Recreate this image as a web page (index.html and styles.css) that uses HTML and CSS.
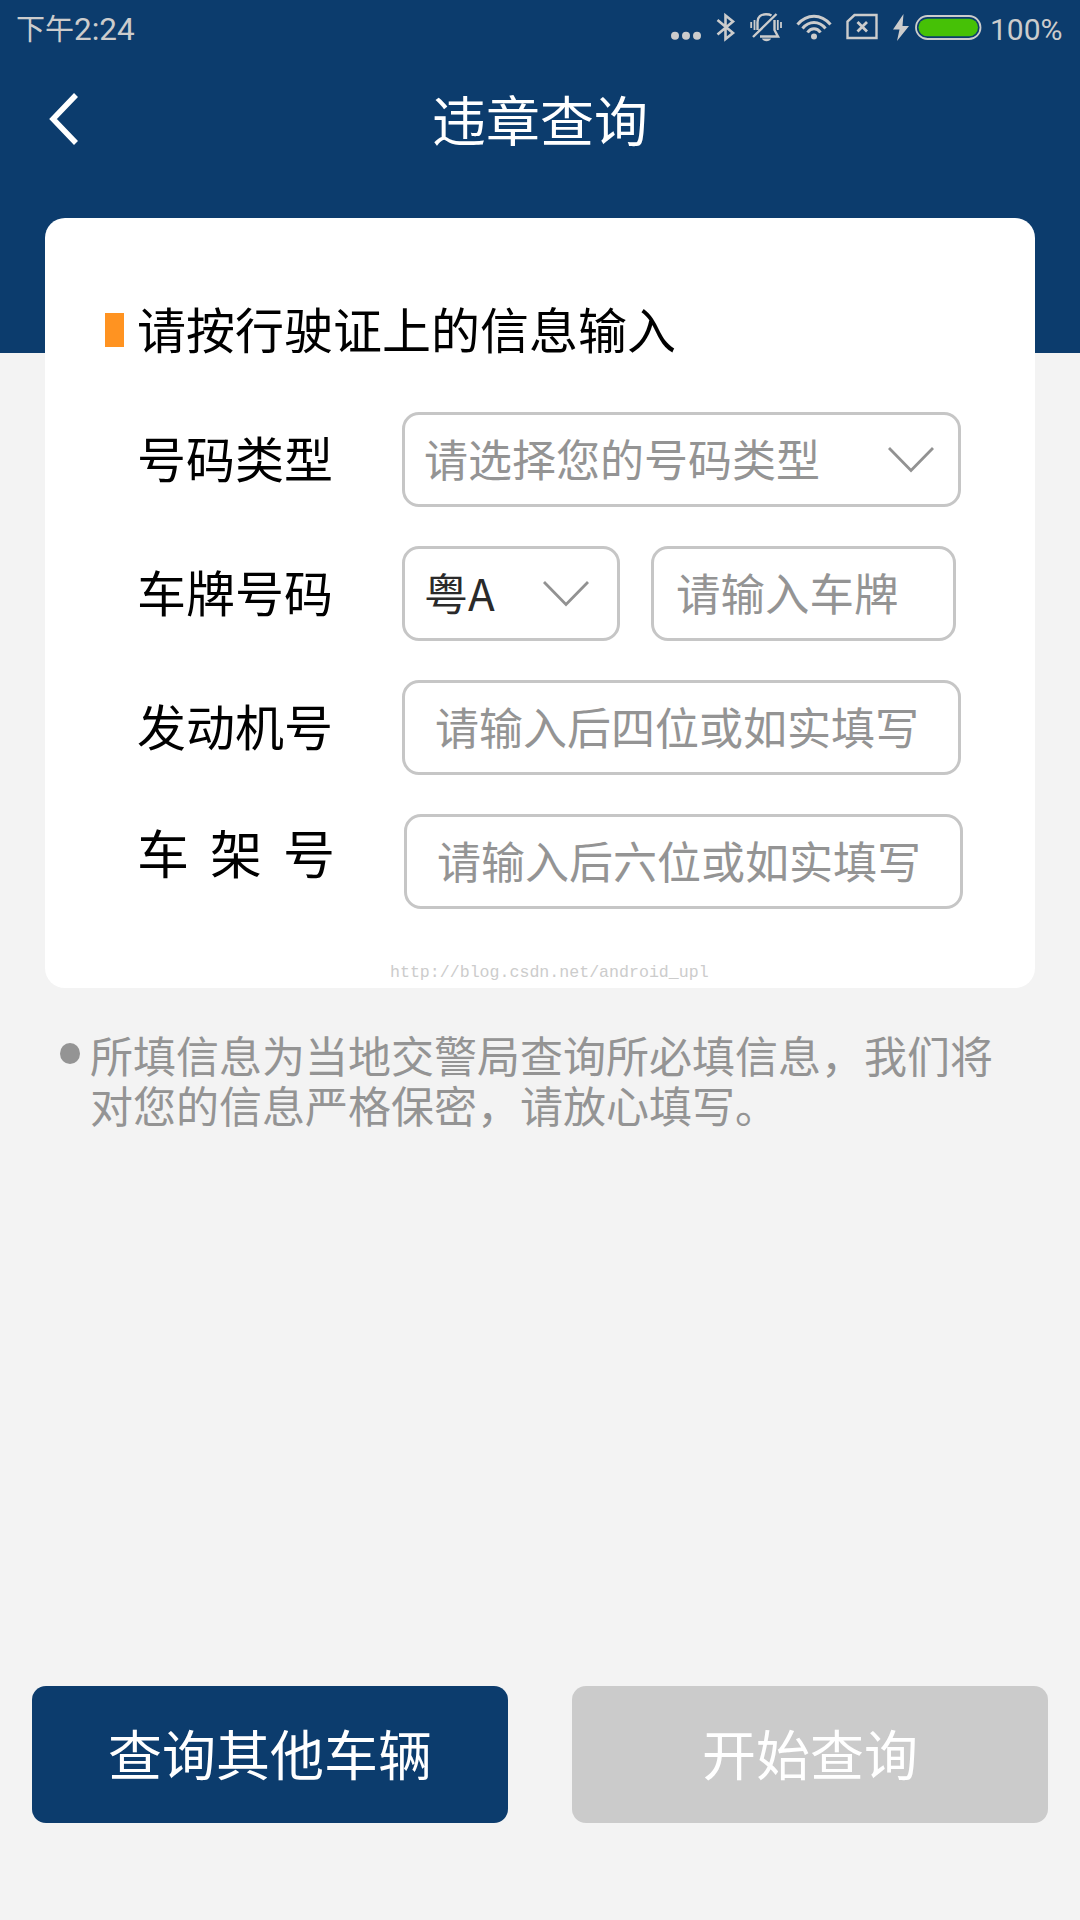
FILE: index.html
```
<!DOCTYPE html>
<html lang="zh-CN">
<head>
    <meta charset="UTF-8">
    <meta name="viewport" content="width=device-width, initial-scale=1.0">
    <title>违章查询</title>
    <link rel="stylesheet" href="styles.css">
</head>
<body>

<header class="header">
    <div class="status-bar">
        <div class="status-time"><span class="ampm">下午</span>2:24</div>
        <div class="status-icons">
            <svg class="icon-dots" width="30" height="50" viewBox="0 0 30 50" fill="#ccc">
                <circle cx="4" cy="35.7" r="4"/>
                <circle cx="15" cy="35.7" r="4"/>
                <circle cx="26" cy="35.7" r="4"/>
            </svg>
            <svg class="icon-bluetooth" width="20" height="50" viewBox="0 0 20 50" fill="none" stroke="#ccc" stroke-width="2.6">
                <path d="M1.5 20L17 33L9.5 39V15.500L17 21.500L1.500 34.500"/>
            </svg>
            <svg class="icon-bell" width="32" height="50" viewBox="0 0 32 50" fill="none" stroke="#ccc" stroke-width="2.4">
                <path d="M7.500 30V22C7.500 17 11 14.200 16 14.200C18 14.200 20 14.600 21.500 15.500M24.500 20V30L28 36.500H10M26.500 14L3 37"/>
                <path d="M4.500 20V30M1.200 22V28M27.800 20V30M31 22V28" stroke-width="1.8"/>
                <path d="M12 38.500H21C20 42 13 42 12 38.500Z" fill="#ccc" stroke="none"/>
            </svg>
            <svg class="icon-wifi" width="36" height="50" viewBox="0 0 36 50" fill="none" stroke="#ccc" stroke-width="3">
                <path d="M1.500 24.500C11 13.500 25 13.500 34.500 24.500M6.500 28.500C13 20.500 23 20.500 29.500 28.500M11.500 32.500C15 27.500 21 27.500 24.500 32.500"/>
                <circle cx="18" cy="36.500" r="3" fill="#ccc" stroke="none"/>
            </svg>
            <svg class="icon-sim" width="32" height="50" viewBox="0 0 32 50" fill="none" stroke="#ccc" stroke-width="2.400">
                <path d="M8.500 15H30.500V38H1.500V21.500Z"/>
                <path d="M11.500 22L21 31.500M21 22L11.500 31.500" stroke-width="2.800"/>
            </svg>
            <svg class="icon-bolt" width="16" height="50" viewBox="0 0 16 50" fill="#ccc">
                <path d="M10.500 14L0 29.500H6.500L4 41L16 26H9.500Z"/>
            </svg>
            <svg class="icon-battery" width="67" height="50" viewBox="0 0 67 50">
                <rect x="1" y="16" width="64.500" height="23" rx="11.500" fill="none" stroke="#ccc" stroke-width="1.800"/>
                <rect x="3.500" y="18.700" width="59.500" height="17.600" rx="8.800" fill="#46c106"/>
            </svg>
            <span class="battery-text">100%</span>
        </div>
    </div>
    <div class="title-bar">
        <svg class="back" width="30" height="54" viewBox="0 0 30 54" fill="none" stroke="#fff" stroke-width="5.500">
            <path d="M27 3L4 27L27 51"/>
        </svg>
        <h1>违章查询</h1>
    </div>
</header>

<main class="card">
    <h2 class="card-title"><span>请按行驶证上的信息输入</span></h2>

    <div class="row">
        <div class="label">号码类型</div>
        <div class="field select">
            <span>请选择您的号码类型</span>
            <svg width="46" height="26" viewBox="0 0 46 26" fill="none" stroke="#929292" stroke-width="2.800">
                <path d="M1 1L23 23.500L45 1"/>
            </svg>
        </div>
    </div>

    <div class="row">
        <div class="label">车牌号码</div>
        <div class="field select province">
            <span>粤A</span>
            <svg width="46" height="26" viewBox="0 0 46 26" fill="none" stroke="#929292" stroke-width="2.800">
                <path d="M1 1L23 23.500L45 1"/>
            </svg>
        </div>
        <div class="field plate"><span>请输入车牌</span></div>
    </div>

    <div class="row">
        <div class="label">发动机号</div>
        <div class="field input"><span>请输入后四位或如实填写</span></div>
    </div>

    <div class="row row-frame">
        <div class="label">车架号</div>
        <div class="field input"><span>请输入后六位或如实填写</span></div>
    </div>

    <div class="watermark">http://blog.csdn.net/android_upl</div>
</main>

<div class="note">
    <span class="dot"></span>
    <p>所填信息为当地交警局查询所必填信息，我们将对您的信息严格保密，请放心填写。</p>
</div>

<footer class="buttons">
    <button class="btn btn-primary">查询其他车辆</button>
    <button class="btn btn-disabled">开始查询</button>
</footer>

</body>
</html>
```

FILE: styles.css
```
* {
    box-sizing: border-box;
}

body {
    display: flex;
    flex-direction: column;
    height: 1920px;
    margin: 0;
    font-family: "Noto Sans CJK SC", sans-serif;
    background-color: #f3f3f3;
    color: #000;
}

.header {
    flex: none;
    height: 353px;
    background-color: #0c3c6d;
    color: #fff;
}

.status-bar {
    display: flex;
    justify-content: space-between;
    height: 56px;
    padding: 0 15px 0 16px;
    font-family: Roboto, "Noto Sans CJK SC", sans-serif;
    font-size: 31.5px;
    line-height: 59px;
    color: #ccc;
}

.ampm {
    font-size: 29px;
}

.status-icons {
    display: flex;
}

.icon-bluetooth {
    margin-left: 15px;
}

.icon-bell {
    margin-left: 14px;
}

.icon-wifi {
    margin-left: 14px;
}

.icon-sim {
    margin-left: 14px;
}

.icon-bolt {
    margin-left: 15px;
}

.icon-battery {
    margin-left: 6px;
}

.battery-text {
    width: 75px;
    margin-left: 8px;
    font-size: 30px;
    white-space: nowrap;
}

.title-bar {
    display: grid;
    grid-template-columns: 79px 1fr 79px;
    align-items: center;
    height: 126px;
}

.back {
    justify-self: end;
}

.title-bar h1 {
    margin: 0;
    padding-bottom: 1px;
    font-size: 54px;
    font-weight: normal;
    line-height: 78px;
    text-align: center;
}

.card {
    flex: none;
    height: 770px;
    margin: -135px 45px 0;
    padding: 77px 72px 0 60px;
    border-radius: 20px;
    background-color: #fff;
}

.card-title {
    display: flex;
    align-items: center;
    gap: 13px;
    height: 70px;
    margin: 0 0 47px;
    font-size: 49px;
    font-weight: normal;
    line-height: 66px;
}

.card-title span {
    padding-bottom: 4px;
}

.card-title::before {
    content: "";
    width: 19px;
    height: 34px;
    background-color: #ff9321;
}

.row {
    display: flex;
    height: 95px;
    margin-bottom: 39px;
    padding-left: 32px;
}

.label {
    width: 265px;
    font-size: 49px;
    line-height: 89px;
}

.field {
    display: flex;
    align-items: center;
    width: 559px;
    height: 95px;
    border: 3px solid #c6c6c6;
    border-radius: 17px;
    font-size: 44px;
    color: #949494;
}

.field span {
    padding-bottom: 4px;
}

.select {
    justify-content: space-between;
    padding: 0 24px 0 19px;
}

.province {
    width: 218px;
    padding-right: 28px;
    color: #2a2a2a;
}

.plate {
    width: 305px;
    margin-left: 31px;
    padding-left: 22px;
    font-size: 44.5px;
}

.input {
    padding-left: 30px;
}

.row-frame {
    margin-bottom: 50px;
}

.row-frame .label {
    width: 267px;
    font-size: 52px;
    line-height: 75px;
    letter-spacing: 21px;
}

.watermark {
    margin-left: 285px;
    margin-right: -60px;
    font-family: "Liberation Mono", monospace;
    font-size: 16.600px;
    line-height: 28px;
    color: #ccc;
}

.note {
    display: flex;
    padding: 41px 80px 0 60px;
    color: #949494;
}

.dot {
    flex: none;
    width: 20px;
    height: 21px;
    margin-top: 14px;
    border-radius: 50%;
    background-color: #949494;
}

.note p {
    width: 910px;
    margin: 0 0 0 10px;
    font-size: 43px;
    line-height: 50px;
}

.buttons {
    display: flex;
    gap: 64px;
    margin-top: auto;
    padding: 0 32px 97px;
}

.btn {
    flex: 1;
    height: 137px;
    padding: 0 0 4px;
    border: none;
    border-radius: 14px;
    font-family: inherit;
    font-size: 54px;
    color: #fff;
}

.btn-primary {
    background-color: #0c3c6d;
}

.btn-disabled {
    background-color: #cbcbcb;
}
```
